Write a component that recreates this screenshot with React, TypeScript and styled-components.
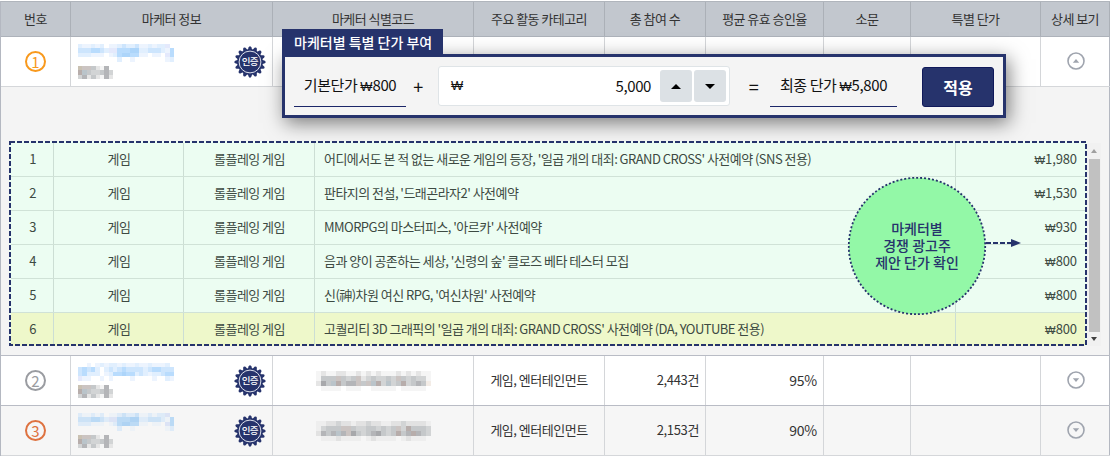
import React from 'react';
import styled, { createGlobalStyle } from 'styled-components';

const NAVY = '#26336c';
const COLUMNS = '70px 202px 201px 131px 101px 118px 87px 130px 69px';

const GlobalStyle = createGlobalStyle`
  * { box-sizing: border-box; }
  body {
    margin: 0;
    background: #fff;
    color: #333;
    font: 13px/20px 'Noto Sans CJK KR', sans-serif;
  }
`;

const Page = styled.main`
  position: relative;
  width: 1110px;
  height: 457px;
  padding-top: 1px;
  overflow: hidden;
`;

const Table = styled.section`
  border-left: 1px solid #b4b8c1;
`;

const HeadRow = styled.div`
  display: grid;
  grid-template-columns: ${COLUMNS};
  height: 36px;
  background: #c2c7ce;
  border-top: 1px solid #b0b5bc;
  border-bottom: 1px solid #adb2ba;
`;

const HeadCell = styled.div`
  display: flex;
  align-items: center;
  justify-content: center;
  border-right: 1px solid #abb0b7;
  letter-spacing: -0.55px;
  white-space: nowrap;
`;

const Row = styled.div<{ $alt?: boolean; $line?: string }>`
  display: grid;
  grid-template-columns: ${COLUMNS};
  height: 50px;
  background: ${(p) => (p.$alt ? '#f6f6f6' : '#fff')};
  border-bottom: 1px solid ${(p) => p.$line ?? '#d5d7da'};
`;

const Cell = styled.div<{ $align?: string; $size?: number; $spacing?: number }>`
  display: flex;
  align-items: center;
  justify-content: ${(p) => p.$align ?? 'center'};
  padding: 0 6px;
  border-right: 1px solid #d4d6d9;
  font-size: ${(p) => p.$size ?? 13}px;
  letter-spacing: ${(p) => p.$spacing ?? 0}px;
  white-space: nowrap;
  &:last-child {
    padding: 0 5px 1px 6px;
    border-right-color: #b4b8c1;
  }
`;

const TextCell = styled(Cell)`
  padding-bottom: 1px;
`;

const RankCircle = styled.span<{ $color: string }>`
  display: flex;
  align-items: center;
  justify-content: center;
  width: 21px;
  height: 21px;
  border: 2px solid ${(p) => p.$color};
  border-radius: 50%;
  color: ${(p) => p.$color};
  font: 15px/15px 'Noto Sans CJK KR', sans-serif;
`;

const MarketerCell = styled(Cell)`
  justify-content: space-between;
  padding: 0 6px 0 7px;
`;

const Names = styled.div`
  display: flex;
  flex-direction: column;
  gap: 4px;
`;

const Panel = styled.div`
  display: flex;
  align-items: flex-start;
  height: 269px;
  padding: 54px 8px 0;
  background: #f4f4f4;
  border-right: 1px solid #b4b8c1;
  border-bottom: 1px solid #b9bcc5;
`;

const OfferFrame = styled.div`
  position: relative;
  width: 1078px;
  height: 205px;
  padding: 2px 2px 0;
  background: #ecfdf2;
`;

const DashedOutline = styled.svg`
  position: absolute;
  inset: 0;
`;

const OfferRow = styled.div<{ $highlight?: boolean }>`
  display: grid;
  grid-template-columns: 43px 130px 131px 641px 129px;
  height: 34px;
  background: ${(p) => (p.$highlight ? '#eef8ca' : '#ecfdf2')};
  border-bottom: 1px solid #d0e2d7;
  color: #3d4a42;
  &:last-of-type { height: 33px; border-bottom: 0; }
`;

const OfferCell = styled.div<{ $align?: string; $spacing?: number }>`
  display: flex;
  align-items: center;
  justify-content: ${(p) => p.$align ?? 'center'};
  padding: 0 8px 1px 9px;
  border-right: 1px solid #ccded4;
  white-space: nowrap;
  letter-spacing: ${(p) => p.$spacing ?? -0.54}px;
  &:last-child { border-right: 0; }
`;

const WonSign = styled.span`
  font-family: 'Liberation Sans', 'Noto Sans CJK KR', sans-serif;
  font-size: 0.86em;
  letter-spacing: 0;
`;

const ScrollTrack = styled.div`
  display: flex;
  flex-direction: column;
  align-items: center;
  justify-content: space-between;
  width: 14px;
  height: 203px;
  margin-top: 2px;
  padding: 6px 0 5px;
  background: #f1f1f1;
`;

const ScrollThumb = styled.div`
  width: 11px;
  height: 173px;
  background: #c1c1c1;
`;

const Arrow = styled.span<{ $up?: boolean; $w: number; $h: number; $color: string }>`
  width: 0;
  height: 0;
  border: ${(p) => p.$w}px solid transparent;
  border-top: ${(p) => (p.$up ? '0' : `${p.$h}px solid ${p.$color}`)};
  border-bottom: ${(p) => (p.$up ? `${p.$h}px solid ${p.$color}` : '0')};
`;

const Callout = styled.div`
  position: absolute;
  left: 847px;
  top: 176px;
  width: 176px;
  height: 140px;
  display: flex;
  align-items: center;
`;

const CalloutDrawing = styled.svg`
  position: absolute;
  inset: 0;
`;

const CalloutText = styled.p`
  position: relative;
  width: 140px;
  margin: 0;
  padding-bottom: 1px;
  color: ${NAVY};
  font-size: 14px;
  font-weight: 500;
  line-height: 17px;
  text-align: center;
`;

const Popup = styled.div`
  position: absolute;
  left: 282px;
  top: 54px;
  display: flex;
  width: 724px;
  height: 64px;
  padding: 9px 9px 0;
  background: #f4f4f4;
  border: 3px solid ${NAVY};
  box-shadow: 3px 5px 18px rgba(0, 0, 0, 0.5);
  color: #111;
  font-size: 15px;
  letter-spacing: -0.4px;
`;

const PopupTab = styled.div`
  position: absolute;
  left: 282px;
  top: 29px;
  width: 161px;
  height: 27px;
  padding-left: 12px;
  background: ${NAVY};
  color: #fff;
  font-size: 14px;
  font-weight: 500;
  line-height: 27px;
  white-space: nowrap;
`;

const Price = styled.div<{ $w: number }>`
  display: flex;
  align-items: center;
  justify-content: center;
  width: ${(p) => p.$w}px;
  height: 41px;
  border-bottom: 1px solid #1b2668;
  white-space: pre;
`;

const Sign = styled.div<{ $w: number }>`
  width: ${(p) => p.$w}px;
  padding-right: ${(p) => (p.$w > 35 ? 0 : 8)}px;
  padding-left: ${(p) => (p.$w > 35 ? 7 : 0)}px;
  font-size: 18px;
  line-height: 40px;
  text-align: center;
`;

const AmountField = styled.div`
  display: flex;
  align-items: center;
  width: 292px;
  height: 40px;
  padding: 0 3px 0 12px;
  background: #fff;
  border: 1px solid #dfe4e7;
  border-radius: 3px;
`;

const Amount = styled.span`
  flex: 1;
  padding-right: 9px;
  text-align: right;
`;

const StepButton = styled.button`
  display: flex;
  align-items: center;
  justify-content: center;
  width: 32px;
  height: 32px;
  margin-right: 2px;
  padding: 0;
  background: #dce1e5;
  border: 0;
  border-radius: 3px;
  &:last-child { margin-right: 0; }
`;

const ApplyButton = styled.button`
  width: 72px;
  height: 40px;
  margin: 1px 0 0 25px;
  padding: 0;
  background: ${NAVY};
  border: 1px solid #10195a;
  border-radius: 3px;
  color: #fff;
  font: 700 16px/36px 'Noto Sans CJK KR', sans-serif;
`;

const TOGGLE = '#9fa4ae';

function Toggle({ up }: { up?: boolean }) {
  return (
    <svg width="18" height="18" viewBox="0 0 18 18">
      <circle cx="9" cy="9" r="8" fill="none" stroke={TOGGLE} strokeWidth="1.6" />
      <path d={up ? 'M5.8 10.8 9 7l3.2 3.8Z' : 'M5.8 7.2 9 11l3.2-3.8Z'} fill={TOGGLE} />
    </svg>
  );
}

function Badge() {
  return (
    <svg width="32" height="32" viewBox="-16 -16 32 32">
      <circle r="12.8" fill={NAVY} />
      {Array.from({ length: 16 }, (_, i) => (
        <path
          key={i}
          d="M-2.3-12-1.3-14.8Q0-16.6 1.3-14.8L2.3-12Z"
          fill={NAVY}
          transform={`rotate(${i * 22.5})`}
        />
      ))}
      <circle r="10.9" fill="none" stroke="#dfe2ec" strokeWidth="1" />
      <text
        x="-0.3"
        y="3.4"
        textAnchor="middle"
        fill="#fff"
        fontFamily="'Noto Sans CJK KR', sans-serif"
        fontSize="9.5"
        fontWeight="500"
        letterSpacing="-0.9"
      >
        인증
      </text>
    </svg>
  );
}

interface MosaicProps {
  rows: string[];
  palette: Record<string, string>;
  width: number;
  height: number;
}

/* Censored text: each character in a row picks one tile of the palette. */
function Mosaic({ rows, palette, width, height }: MosaicProps) {
  const cols = rows[0].length;
  return (
    <svg
      width={width}
      height={height}
      viewBox={`0 0 ${cols} ${rows.length}`}
      preserveAspectRatio="none"
      shapeRendering="crispEdges"
    >
      {rows.flatMap((row, y) =>
        [...row].map((c, x) =>
          palette[c] ? <rect key={`${x}-${y}`} x={x} y={y} width="1" height="1" fill={palette[c]} /> : null,
        ),
      )}
    </svg>
  );
}

const blue = { a: '#edf4fe', b: '#e1effe', c: '#cde5fd', d: '#b9dcfd', e: '#add5fa', v: '#e4e9fc' };
const blueAlt = { a: '#edf2f7', b: '#deebf8', c: '#cce2f6', d: '#bbdaf5', e: '#afd3f3', v: '#dce3f5' };
const grey = {
  a: '#f5f5f5', b: '#e5e5e5', c: '#d2d4d5', d: '#c5c8ca', e: '#b4b5b8', f: '#a7a8ab',
  r: '#cbc4c2', s: '#b7adab', t: '#bac4ca', y: '#c9c1b2', o: '#f3ece6',
};
const greyAlt = { ...grey, a: '#eeeeee', b: '#e2e2e2' };

const linkA = ['baabab.aabcbbcaababbv.', 'cccddcbvvdddeebbcccbad', 'bbbaaa.abdeeddaa.aa.vd', '.........b..a.......ab'];
const linkB = ['..a.ababbabaabaabaaab.', 'cdcdb.bcbcdccccbcddccc', 'cdbbb.abddeddbcbabbcdd', 'vaa..a.a....a....a..ba'];
const nameRows = ['yrrdbae.', 'stdccdec', 'cebdbaeb'];
const codeA = [
  'abaabbaabababaaabababaa',
  'adddrdcdrbcdccdcrdcdcca',
  'bfdtsdeerdrtsctcdscdedo',
  '.aaaa.aaa..aaaaa.aaaaa.',
];
const codeB = [
  'aabbcbbabbcbbaabbcbbbba',
  'acdddrrdccddcdcdrcsdddc',
  'bedeterfdcdefdcdsdesedc',
  '.aaabaaaa.abaaaa.abaaa.',
];

function MarketerInfo({ link, alt }: { link: string[]; alt?: boolean }) {
  return (
    <MarketerCell>
      <Names>
        <Mosaic rows={link} palette={alt ? blueAlt : blue} width={96} height={17.5} />
        <Mosaic rows={nameRows} palette={grey} width={35} height={13} />
      </Names>
      <Badge />
    </MarketerCell>
  );
}

const headings = ['번호', '마케터 정보', '마케터 식별코드', '주요 활동 카테고리', '총 참여 수', '평균 유효 승인율', '소문', '특별 단가', '상세 보기'];

const offers = [
  ["어디에서도 본 적 없는 새로운 게임의 등장, '일곱 개의 대죄: GRAND CROSS' 사전예약 (SNS 전용)", '1,980'],
  ["판타지의 전설, '드래곤라자2' 사전예약", '1,530'],
  ["MMORPG의 마스터피스, '아르카' 사전예약", '930'],
  ["음과 양이 공존하는 세상, '신령의 숲' 클로즈 베타 테스터 모집", '800'],
  ["신(神)차원 여신 RPG, '여신차원' 사전예약", '800'],
  ["고퀄리티 3D 그래픽의 '일곱 개의 대죄: GRAND CROSS' 사전예약 (DA, YOUTUBE 전용)", '800'],
];

const marketers = [
  { rank: 2, color: '#9a9ca1', link: linkB, code: codeA, count: '2,443건', rate: '95%', line: '#b9bcc5' },
  { rank: 3, color: '#de7240', link: linkA, code: codeB, count: '2,153건', rate: '90%', alt: true },
];

export default function App() {
  return (
    <Page>
      <GlobalStyle />
      <Table>
        <HeadRow>
          {headings.map((h) => (
            <HeadCell key={h}>{h}</HeadCell>
          ))}
        </HeadRow>
        <Row>
          <Cell><RankCircle $color="#f8991d">1</RankCircle></Cell>
          <MarketerInfo link={linkA} />
          <Cell /><Cell /><Cell /><Cell /><Cell /><Cell />
          <Cell><Toggle up /></Cell>
        </Row>
        <Panel>
          <OfferFrame>
            {offers.map(([title, price], i) => (
              <OfferRow key={title} $highlight={i === 5}>
                <OfferCell>{i + 1}</OfferCell>
                <OfferCell>게임</OfferCell>
                <OfferCell>롤플레잉 게임</OfferCell>
                <OfferCell $align="flex-start">{title}</OfferCell>
                <OfferCell $align="flex-end" $spacing={-0.1}><span><WonSign>₩</WonSign>{price}</span></OfferCell>
              </OfferRow>
            ))}
            <DashedOutline width="1078" height="205">
              <rect x="1" y="1" width="1076" height="203" fill="none" stroke={NAVY} strokeWidth="2" strokeDasharray="5 2" />
            </DashedOutline>
          </OfferFrame>
          <ScrollTrack>
            <Arrow $up $w={3} $h={4} $color="#a0a0a0" />
            <ScrollThumb />
            <Arrow $w={3} $h={4} $color="#404040" />
          </ScrollTrack>
        </Panel>
        {marketers.map((m) => (
          <Row key={m.rank} $alt={m.alt} $line={m.line}>
            <Cell><RankCircle $color={m.color}>{m.rank}</RankCircle></Cell>
            <MarketerInfo link={m.link} alt={m.alt} />
            <Cell><Mosaic rows={m.code} palette={m.alt ? greyAlt : grey} width={115} height={20} /></Cell>
            <TextCell $spacing={-0.5}>게임, 엔터테인먼트</TextCell>
            <TextCell $align="flex-end" $spacing={-0.35}>{m.count}</TextCell>
            <TextCell $align="flex-end" $size={14} $spacing={-0.2}>{m.rate}</TextCell>
            <Cell /><Cell />
            <Cell><Toggle /></Cell>
          </Row>
        ))}
      </Table>
      <Callout>
        <CalloutDrawing width="176" height="140">
          <circle cx="70" cy="70" r="68.2" fill="#93f8a7" stroke={NAVY} strokeWidth="1.8" strokeDasharray="2 2" />
          <path d="M139 67h25" stroke={NAVY} strokeWidth="2" strokeDasharray="5 2" />
          <path d="M164 63 174 67 164 71Z" fill={NAVY} />
        </CalloutDrawing>
        <CalloutText>
          마케터별<br />경쟁 광고주<br />제안 단가 확인
        </CalloutText>
      </Callout>
      <Popup>
        <Price $w={112}><span>기본단가 <WonSign>₩</WonSign>800</span></Price>
        <Sign $w={32}>+</Sign>
        <AmountField>
          <WonSign>₩</WonSign>
          <Amount>5,000</Amount>
          <StepButton><Arrow $up $w={5} $h={5} $color="#000" /></StepButton>
          <StepButton><Arrow $w={5} $h={5} $color="#000" /></StepButton>
        </AmountField>
        <Sign $w={40}>=</Sign>
        <Price $w={127}><span>최종 단가 <WonSign>₩</WonSign>5,800</span></Price>
        <ApplyButton>적용</ApplyButton>
      </Popup>
      <PopupTab>마케터별 특별 단가 부여</PopupTab>
    </Page>
  );
}
